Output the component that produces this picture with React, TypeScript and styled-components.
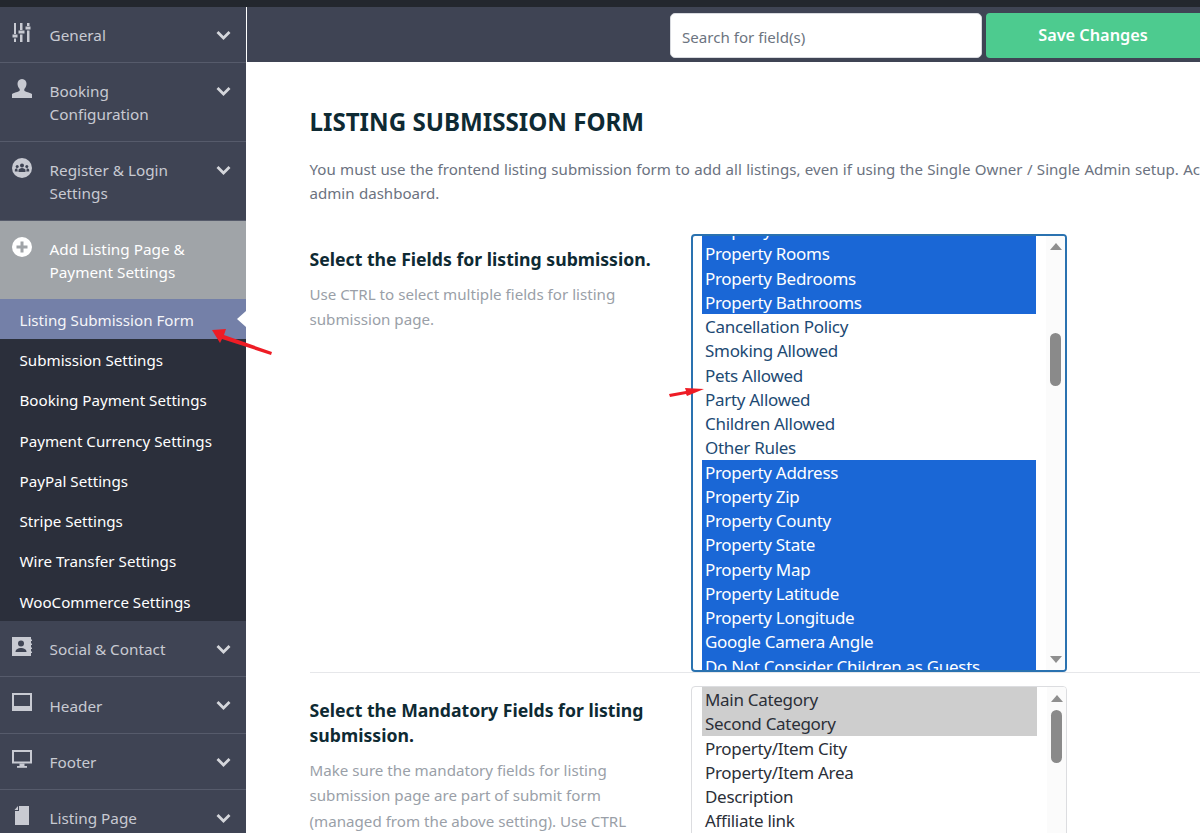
import React from "react";
import styled, { createGlobalStyle } from "styled-components";

const Global = createGlobalStyle`
  html, body { margin: 0; padding: 0; height: 833px; overflow: hidden; background: #fff; }
  body { font-family: "Noto Sans", "Open Sans", sans-serif; }
  #root { height: 833px; }
`;

const Page = styled.div`
  position: relative;
  height: 833px;
  width: 1200px;
  overflow: hidden;
  display: flex;
  flex-direction: column;
`;
const TopStrip = styled.div`
  height: 7px;
  flex: none;
  background: #23272e;
`;
const Body = styled.div`
  flex: 1;
  min-height: 0;
  display: flex;
`;
const Sidebar = styled.nav`
  width: 246px;
  flex: none;
  background: #3f4454;
  display: flex;
  flex-direction: column;
`;
const Section = styled.div<{ $h: number; $active?: boolean }>`
  height: ${(p) => p.$h}px;
  flex: none;
  box-sizing: border-box;
  border-bottom: 1px solid ${(p) => (p.$active ? "#a0a4a8" : "#565b6b")};
  background: ${(p) => (p.$active ? "#a0a4a8" : "#3f4454")};
  color: ${(p) => (p.$active ? "#ffffff" : "#c8cad2")};
  display: grid;
  grid-template-columns: 49.5px 1fr 30px;
  padding: 16px 0 0 0;
`;
const IconCell = styled.div`
  padding-left: 12px;
  color: inherit;
  svg { display: block; width: 20px; height: 20px; }
`;
const SectionLabel = styled.div<{ $nudge?: number }>`
  font-size: 15.3px;
  line-height: 23px;
  padding-top: ${(p) => 1 + (p.$nudge ?? 0)}px;
`;
const Chevron = styled.div`
  color: #d4d6db;
  svg { display: block; width: 15px; height: 10px; margin-top: 7px; }
`;
const SubMenu = styled.div`
  background: #2b2f3b;
  display: flex;
  flex-direction: column;
  flex: none;
`;
const SubItem = styled.div<{ $current?: boolean }>`
  position: relative;
  height: ${(p) => (p.$current ? 40 : 40.3)}px;
  line-height: 42px;
  padding-left: 19.5px;
  font-size: 15.15px;
  background: ${(p) => (p.$current ? "#7480a8" : "transparent")};
  color: ${(p) => (p.$current ? "#f4f5f8" : "#ffffff")};
  ${(p) =>
    p.$current
      ? `&::after {
          content: "";
          position: absolute;
          right: 0;
          top: 12px;
          border-style: solid;
          border-width: 8px 9px 8px 0;
          border-color: transparent #fff transparent transparent;
        }`
      : ""}
`;
const Content = styled.div`
  flex: 1;
  min-width: 0;
  display: flex;
  flex-direction: column;
  margin-left: 1px;
`;
const Toolbar = styled.div`
  height: 55px;
  flex: none;
  background: #3f4454;
  display: flex;
  justify-content: flex-end;
  align-items: flex-start;
  gap: 4px;
  padding-top: 6px;
  box-sizing: border-box;
`;
const Search = styled.div`
  width: 312px;
  height: 45px;
  box-sizing: border-box;
  background: #fff;
  border: 1px solid #d8dadf;
  border-radius: 5px;
  padding-left: 11px;
  font-size: 15.1px;
  line-height: 46px;
  color: #6c7480;
`;
const SaveButton = styled.div`
  width: 214px;
  height: 45px;
  background: #4dcb8f;
  border-radius: 4px 0 0 4px;
  color: #fff;
  font-size: 16.3px;
  font-weight: 600;
  line-height: 45px;
  text-align: center;
`;
const Main = styled.main`
  flex: 1;
  min-height: 0;
  overflow: hidden;
  padding: 43px 0 0 62.5px;
`;
const Title = styled.h1`
  margin: 0;
  font-size: 24.15px;
  line-height: 34px;
  font-weight: 700;
  color: #0e2a33;
  white-space: nowrap;
`;
const Intro = styled.p`
  margin: 18px 0 29px;
  width: 1100px;
  font-size: 15.08px;
  word-spacing: 0.45px;
  line-height: 24px;
  color: #6b7280;
  white-space: nowrap;
`;
const Row = styled.div<{ $line?: boolean }>`
  display: grid;
  grid-template-columns: 381.5px 376px;
  width: 1000px;
  ${(p) => (p.$line ? "border-bottom: 1px solid #e6e7ea;" : "")}
`;
const RowText = styled.div<{ $top: number }>`
  padding-top: ${(p) => p.$top}px;
`;
const RowTitle = styled.h2`
  margin: 0;
  width: 350px;
  font-size: 17.65px;
  line-height: 25px;
  font-weight: 700;
  color: #0e2a33;
`;
const RowHelp = styled.p`
  margin: 9.5px 0 0;
  width: 335px;
  font-size: 15.15px;
  line-height: 25.5px;
  color: #9a9fa8;
`;
const ListBox = styled.div<{ $focus?: boolean; $h: number; $mt: number }>`
  height: ${(p) => p.$h}px;
  margin-top: ${(p) => p.$mt}px;
  box-sizing: border-box;
  border: ${(p) => (p.$focus ? "2px solid #2a72b0" : "1px solid #dcdde0")};
  border-radius: 4px;
  background: #fff;
  display: grid;
  grid-template-columns: 1fr 19px;
  overflow: hidden;
  padding-left: ${(p) => (p.$focus ? 9 : 10)}px;
`;
const Options = styled.div<{ $shift: number; $gutter: number }>`
  overflow: hidden;
  padding-right: ${(p) => p.$gutter}px;
  &::before {
    content: "";
    display: block;
    margin-top: ${(p) => p.$shift}px;
  }
`;
const Option = styled.div<{ $sel?: "blue" | "grey"; $tone: string }>`
  height: 24.25px;
  line-height: 26px;
  padding-left: 3px;
  font-size: 17px;
  letter-spacing: -0.3px;
  white-space: nowrap;
  overflow: hidden;
  color: ${(p) => (p.$sel === "blue" ? "#ffffff" : p.$tone)};
  background: ${(p) =>
    p.$sel === "blue" ? "#1a67d6" : p.$sel === "grey" ? "#cecece" : "transparent"};
`;
const ScrollTrack = styled.div`
  display: flex;
  flex-direction: column;
  align-items: center;
  background: #fbfbfb;
`;
const Thumb = styled.div<{ $top: number; $h: number }>`
  width: 11px;
  height: ${(p) => p.$h}px;
  margin-top: ${(p) => p.$top}px;
  border-radius: 6px;
  background: #8a8a8a;
  flex: none;
`;
const ArrowUp = styled.div<{ $top: number }>`
  margin-top: ${(p) => p.$top}px;
  width: 0;
  height: 0;
  border-style: solid;
  border-width: 0 6.5px 7px 6.5px;
  border-color: transparent transparent #8f8f8f transparent;
  flex: none;
`;
const ArrowDown = styled.div`
  margin-top: auto;
  margin-bottom: 7px;
  width: 0;
  height: 0;
  border-style: solid;
  border-width: 7px 6.5px 0 6.5px;
  border-color: #8f8f8f transparent transparent transparent;
  flex: none;
`;
const Overlay = styled.svg`
  position: absolute;
  left: 0;
  top: 0;
  width: 1200px;
  height: 833px;
  pointer-events: none;
`;

const ChevronIcon = () => (
  <Chevron>
    <svg viewBox="0 0 15 10">
      <path d="M1.500 2 L7.500 8 L13.500 2" fill="none" stroke="currentColor" strokeWidth="2.800" />
    </svg>
  </Chevron>
);

const icons: Record<string, React.ReactNode> = {
  sliders: (
    <svg viewBox="0 0 20 20" fill="currentColor">
      <rect x="2" y="0" width="2" height="19" />
      <rect x="8" y="0" width="2.500" height="19" />
      <rect x="15" y="0" width="2.500" height="19" />
      <rect x="0" y="11" width="6" height="4.500" fill="#3f4454" />
      <rect x="6" y="7" width="7" height="4.500" fill="#3f4454" />
      <rect x="13" y="3" width="6" height="4.500" fill="#3f4454" />
      <rect x="0.500" y="11.500" width="5" height="3" />
      <rect x="6.500" y="7.500" width="6" height="3" />
      <rect x="13.500" y="3.500" width="5" height="3" />
    </svg>
  ),
  person: (
    <svg viewBox="0 0 20 20" fill="currentColor">
      <path d="M10 0c3 0 4.500 2.200 4.500 4.800 0 2.200-1 4-2.200 5.200v1.600c0 1 4 1.600 7.700 3.400V19H0v-4c3.700-1.800 7.700-2.400 7.700-3.400V10C6.500 8.800 5.500 7 5.500 4.800 5.500 2.200 7 0 10 0z" />
    </svg>
  ),
  group: (
    <svg viewBox="0 0 20 20">
      <circle cx="10" cy="10" r="10" fill="currentColor" />
      <g fill="#3f4454">
        <circle cx="10" cy="7.500" r="2" /><path d="M6.500 14v-2c0-1 2-2 3.500-2s3.500 1 3.500 2v2z" />
        <circle cx="5.200" cy="8.500" r="1.500" /><path d="M2.800 13.500v-1.500c0-1 1.200-1.800 2.400-1.800l.6 3.300z" />
        <circle cx="14.800" cy="8.500" r="1.500" /><path d="M17.200 13.500v-1.500c0-1-1.200-1.800-2.400-1.800l-.6 3.300z" />
      </g>
    </svg>
  ),
  plus: (
    <svg viewBox="0 0 20 20">
      <circle cx="10" cy="10" r="10" fill="currentColor" />
      <path d="M8.500 4.500h3v4h4v3h-4v4h-3v-4h-4v-3h4z" fill="#a0a4a8" />
    </svg>
  ),
  book: (
    <svg viewBox="0 0 20 20">
      <path d="M0 0h19v2.500h1v1.500h-1v2.500h1V8h-1v2.500h1V12h-1v2.500h1V16h-1v3H0z" fill="currentColor" />
      <circle cx="9" cy="6.500" r="3" fill="#3f4454" />
      <path d="M3.500 15c0-3 3-4 5.500-4s5.500 1 5.500 4z" fill="#3f4454" />
    </svg>
  ),
  laptop: (
    <svg viewBox="0 0 20 20">
      <rect x="0" y="0" width="20" height="18" fill="currentColor" />
      <rect x="2" y="2" width="16" height="11" fill="#3f4454" />
    </svg>
  ),
  monitor: (
    <svg viewBox="0 0 20 20">
      <rect x="0" y="0" width="20" height="13.500" fill="currentColor" />
      <rect x="2" y="2" width="16" height="9.500" fill="#3f4454" />
      <rect x="7.500" y="13.500" width="5" height="2.500" fill="currentColor" />
      <rect x="5" y="16" width="10" height="1.800" fill="currentColor" />
    </svg>
  ),
  file: (
    <svg viewBox="0 0 20 20">
      <path d="M7 0h10v19H3V5h4zM2.500 4 6 0v4z" fill="currentColor" />
    </svg>
  ),
};

type Sec = { label: React.ReactNode; icon: string; h: number; active?: boolean; nudge?: number };

const SideSection = ({ label, icon, h, active, nudge }: Sec) => (
  <Section $h={h} $active={active}>
    <IconCell>{icons[icon]}</IconCell>
    <SectionLabel $nudge={nudge}>{label}</SectionLabel>
    {active ? <div /> : <ChevronIcon />}
  </Section>
);

const subItems = [
  "Submission Settings",
  "Booking Payment Settings",
  "Payment Currency Settings",
  "PayPal Settings",
  "Stripe Settings",
  "Wire Transfer Settings",
  "WooCommerce Settings",
];

const firstOptions: [string, boolean][] = [
  ["Property Size", true],
  ["Property Rooms", true],
  ["Property Bedrooms", true],
  ["Property Bathrooms", true],
  ["Cancellation Policy", false],
  ["Smoking Allowed", false],
  ["Pets Allowed", false],
  ["Party Allowed", false],
  ["Children Allowed", false],
  ["Other Rules", false],
  ["Property Address", true],
  ["Property Zip", true],
  ["Property County", true],
  ["Property State", true],
  ["Property Map", true],
  ["Property Latitude", true],
  ["Property Longitude", true],
  ["Google Camera Angle", true],
  ["Do Not Consider Children as Guests", true],
];
const secondOptions: [string, boolean][] = [
  ["Main Category", true],
  ["Second Category", true],
  ["Property/Item City", false],
  ["Property/Item Area", false],
  ["Description", false],
  ["Affiliate link", false],
  ["Price", true],
];

export default function App() {
  return (
    <Page>
      <Global />
      <TopStrip />
      <Body>
        <Sidebar>
          <SideSection icon="sliders" h={56} label="General" />
          <SideSection icon="person" h={79} label={<>Booking<br />Configuration</>} />
          <SideSection icon="group" h={79} label={<>Register &amp; Login<br />Settings</>} />
          <SideSection icon="plus" h={78} active label={<>Add Listing Page &amp;<br />Payment Settings</>} />
          <SubMenu>
            <SubItem $current>Listing Submission Form</SubItem>
            {subItems.map((s) => (
              <SubItem key={s}>{s}</SubItem>
            ))}
          </SubMenu>
          <SideSection icon="book" h={56} label="Social & Contact" />
          <SideSection icon="laptop" h={57} nudge={1} label="Header" />
          <SideSection icon="monitor" h={56} label="Footer" />
          <SideSection icon="file" h={56} label="Listing Page" />
        </Sidebar>
        <Content>
          <Toolbar>
            <Search>Search for field(s)</Search>
            <SaveButton>Save Changes</SaveButton>
          </Toolbar>
          <Main>
            <Title>LISTING SUBMISSION FORM</Title>
            <Intro>
              You must use the frontend listing submission form to add all listings, even if using the Single Owner / Single Admin setup. Access to the
              <br />
              admin dashboard.
            </Intro>
            <Row $line>
              <RowText $top={13}>
                <RowTitle>Select the Fields for listing submission.</RowTitle>
                <RowHelp>Use CTRL to select multiple fields for listing submission page.</RowHelp>
              </RowText>
              <ListBox $focus $h={438} $mt={0}>
                <Options $shift={-19} $gutter={10}>
                  {firstOptions.map(([t, s]) => (
                    <Option key={t} $sel={s ? "blue" : undefined} $tone="#1d4a73">{t}</Option>
                  ))}
                </Options>
                <ScrollTrack>
                  <ArrowUp $top={7} />
                  <Thumb $top={83} $h={53} />
                  <ArrowDown />
                </ScrollTrack>
              </ListBox>
            </Row>
            <Row>
              <RowText $top={25}>
                <RowTitle>Select the Mandatory Fields for listing submission.</RowTitle>
                <RowHelp>Make sure the mandatory fields for listing submission page are part of submit form (managed from the above setting). Use CTRL</RowHelp>
              </RowText>
              <ListBox $h={200} $mt={13}>
                <Options $shift={0} $gutter={10}>
                  {secondOptions.map(([t, s]) => (
                    <Option key={t} $sel={s ? "grey" : undefined} $tone="#2b2f38">{t}</Option>
                  ))}
                </Options>
                <ScrollTrack>
                  <ArrowUp $top={8} />
                  <Thumb $top={8} $h={53} />
                </ScrollTrack>
              </ListBox>
            </Row>
          </Main>
        </Content>
      </Body>
      <Overlay viewBox="0 0 1200 833">
        <path d="M212 330 L226 329 L224 335 L272 352 L271 355 L222 339 L220 343 Z" fill="#ee1c25" />
        <path d="M669 394 L686 391 L685 388 L704 389 L687 396 L686 394 L670 397 Z" fill="#ee1c25" />
      </Overlay>
    </Page>
  );
}
